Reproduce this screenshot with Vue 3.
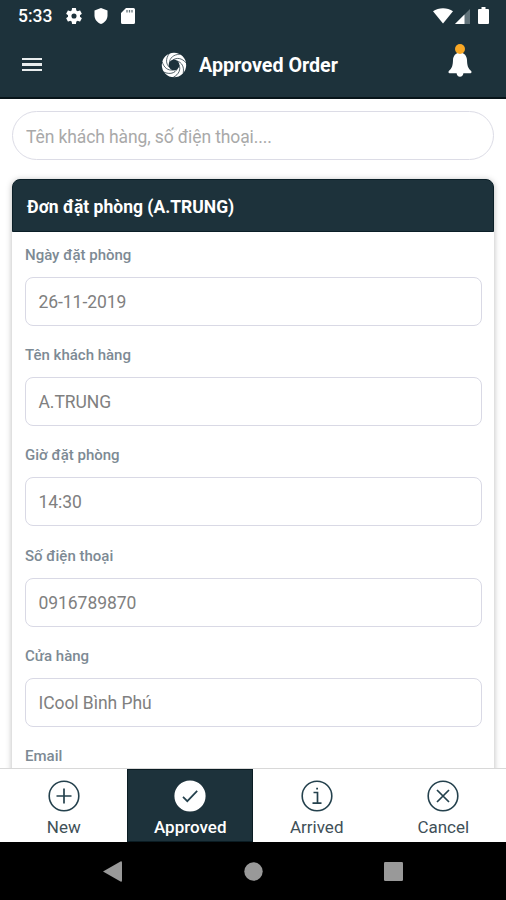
<template>
  <div class="screen">
    <header class="app-header">
      <div class="status-bar">
        <div class="status-left">
          <span class="clock">5:33</span>
          <svg class="icon-gear" viewBox="2 2 20 20" width="16" height="16">
            <path fill="#fff" d="M19.43 12.98c.04-.32.07-.64.07-.98s-.03-.66-.07-.98l2.11-1.65c.19-.15.24-.42.12-.64l-2-3.46c-.12-.22-.39-.3-.61-.22l-2.49 1c-.52-.4-1.08-.73-1.69-.98l-.38-2.65A.49.49 0 0 0 14 2h-4c-.25 0-.46.18-.49.42l-.38 2.65c-.61.25-1.17.59-1.69.98l-2.49-1c-.23-.09-.49 0-.61.22l-2 3.46c-.13.22-.07.49.12.64l2.11 1.65c-.04.32-.07.65-.07.98s.03.66.07.98l-2.11 1.65c-.19.15-.24.42-.12.64l2 3.46c.12.22.39.3.61.22l2.49-1c.52.4 1.08.73 1.69.98l.38 2.65c.03.24.24.42.49.42h4c.25 0 .46-.18.49-.42l.38-2.65c.61-.25 1.17-.59 1.69-.98l2.49 1c.23.09.49 0 .61-.22l2-3.46c.12-.22.07-.49-.12-.64l-2.11-1.65zM12 15.2a3.2 3.2 0 1 1 0-6.4 3.2 3.2 0 0 1 0 6.4z" />
          </svg>
          <svg class="icon-shield" viewBox="0 0 14 16" width="14" height="16">
            <path fill="#fff" d="M7 0 L13.5 2.6 V7.5 C13.5 11.5 10.6 14.8 7 16 C3.4 14.8 .5 11.5 .5 7.5 V2.6 Z" />
          </svg>
          <svg class="icon-sd" viewBox="0 0 14 16" width="14" height="16">
            <path fill="#fff" d="M5 0 H12.5 A1.5 1.5 0 0 1 14 1.5 V14.5 A1.5 1.5 0 0 1 12.5 16 H1.5 A1.5 1.5 0 0 1 0 14.5 V5 Z" />
            <path stroke="#66757b" stroke-width="1.3" d="M6 2 V4.6 M8.5 2 V4.6 M11 2 V4.6" />
          </svg>
        </div>
        <div class="status-right">
          <svg viewBox="0 0 20 16" width="20" height="16">
            <path fill="#fff" d="M0 3.2 C5.5 -.8 14.5 -.8 20 3.2 L10 15.5 Z" />
          </svg>
          <svg class="icon-signal" viewBox="0 0 15 15" width="15" height="15">
            <path fill="#62737a" d="M15 0 V15 H0 Z" />
            <path fill="#fff" d="M9.5 5.5 V15 H0 Z" />
          </svg>
          <svg class="icon-battery" viewBox="0 0 11 17" width="11" height="17">
            <path fill="#fff" d="M3.5 0 H7.5 V2 H10 A1 1 0 0 1 11 3 V16 A1 1 0 0 1 10 17 H1 A1 1 0 0 1 0 16 V3 A1 1 0 0 1 1 2 H3.5 Z" />
          </svg>
        </div>
      </div>

      <div class="title-bar">
        <button class="menu-btn">
          <span></span>
          <span></span>
          <span></span>
        </button>
        <div class="title">
          <svg viewBox="-13 -13 26 26" width="26" height="26">
            <circle r="8.8" fill="none" stroke="#fff" stroke-width="6.8" />
            <g v-for="n in 7" :key="n" :transform="`rotate(${n * 51.43})`">
              <path fill="none" stroke="#1d323b" stroke-width=".7" d="M-4.6 -2 C-4.4 -7 -.5 -10.6 6 -10.8" />
              <path fill="#1d323b" d="M6 -11 L8 -9.9 L9.6 -13 L4.4 -13.5 Z" />
            </g>
          </svg>
          <h1>Approved Order</h1>
        </div>
        <button class="bell-btn">
          <svg viewBox="0 0 24 34" width="24" height="34">
            <path fill="#fff" d="M12 8.5 C7.6 8.8 5.2 12 5 16 C4.8 21.5 4 24.5 .8 27 C.2 28 .5 29.2 1.6 29.2 H8.6 C8.9 31.2 10 32.8 12 32.8 C14 32.8 15.1 31.2 15.4 29.2 H22.4 C23.5 29.2 23.8 28 23.2 27 C20 24.5 19.2 21.5 19 16 C18.8 12 16.4 8.8 12 8.5 Z" />
            <circle cx="12" cy="5" r="5" fill="#f9a825" />
          </svg>
        </button>
      </div>
    </header>

    <main class="content">
      <input v-model="search" class="search" type="text" placeholder="Tên khách hàng, số điện thoại....">
      <section class="order-card">
        <div class="order-title">Đơn đặt phòng (A.TRUNG)</div>
        <div class="order-body">
          <div v-for="field in fields" :key="field.label" class="field">
            <label>{{ field.label }}</label>
            <div class="field-value">{{ field.value }}</div>
          </div>
        </div>
      </section>
    </main>

    <nav class="tabs">
      <button v-for="tab in tabs" :key="tab.name" class="tab" :class="{ active: tab.name === activeTab }"
        @click="activeTab = tab.name">
        <svg viewBox="0 0 32 32" width="32" height="32">
          <circle class="ring" cx="16" cy="16" r="14.8" />
          <path class="glyph" :d="tab.icon" />
        </svg>
        <span>{{ tab.name }}</span>
      </button>
    </nav>

    <footer class="system-nav">
      <svg viewBox="0 0 19 21" width="19" height="21">
        <path d="M0 10.5 L17.5 .4 Q19 0 19 1.5 V19.5 Q19 21 17.5 20.6 Z" />
      </svg>
      <svg viewBox="0 0 19 19" width="19" height="19">
        <circle cx="9.5" cy="9.5" r="9.2" />
      </svg>
      <svg viewBox="0 0 19 19" width="19" height="19">
        <rect width="19" height="19" rx="1.2" />
      </svg>
    </footer>
  </div>
</template>

<script setup>
import { ref } from 'vue';

const search = ref('');
const activeTab = ref('Approved');

const fields = [
  { label: 'Ngày đặt phòng', value: '26-11-2019' },
  { label: 'Tên khách hàng', value: 'A.TRUNG' },
  { label: 'Giờ đặt phòng', value: '14:30' },
  { label: 'Số điện thoại', value: '0916789870' },
  { label: 'Cửa hàng', value: 'ICool Bình Phú' },
  { label: 'Email', value: '' }
];

const tabs = [
  { name: 'New', icon: 'M16 8.5 V23.5 M8.5 16 H23.5' },
  { name: 'Approved', icon: 'M9 16.8 L13.3 21.2 L23.2 10.8' },
  { name: 'Arrived', icon: 'M12.5 12.5 H16.5 V23 M11.5 23.2 H20.5 M15.2 8.6 H17' },
  { name: 'Cancel', icon: 'M10 10 L22 22 M22 10 L10 22' }
];
</script>

<style>
body {
  margin: 0;
  background: #fff;
}
</style>

<style scoped>
.screen {
  width: 506px;
  height: 900px;
  display: flex;
  flex-direction: column;
  overflow: hidden;
  background: #fff;
  font-family: Roboto, "Noto Sans", sans-serif;
}

button {
  padding: 0;
  border: none;
  background: none;
  font-family: inherit;
}

svg {
  display: block;
  flex-shrink: 0;
}

.app-header {
  flex: 0 0 99px;
  box-sizing: border-box;
  background: #1d323b;
  border-bottom: 2px solid #071419;
  color: #fff;
}

.status-bar {
  height: 32px;
  display: flex;
  justify-content: space-between;
  align-items: center;
  padding: 0 17px 0 18px;
}

.status-left,
.status-right {
  display: flex;
  align-items: center;
}

.status-right {
  margin-top: -1px;
}

.clock {
  width: 48px;
  font-size: 17.5px;
  font-weight: 500;
  line-height: 32px;
}

.icon-shield {
  margin-left: 12px;
}

.icon-sd {
  margin-left: 13px;
}

.icon-signal {
  margin: 1px 0 0 2px;
}

.icon-battery {
  margin-left: 8px;
}

.title-bar {
  height: 65px;
  display: grid;
  grid-template-columns: 64px 1fr 64px;
  align-items: center;
}

.menu-btn {
  width: 20px;
  display: grid;
  gap: 3px;
  margin-left: 22px;
}

.menu-btn span {
  height: 2.5px;
  background: #e9edee;
}

.title {
  display: flex;
  align-items: center;
  gap: 12px;
  padding-left: 97px;
}

.title h1 {
  margin: 2px 0 0;
  font-size: 19.7px;
  font-weight: 700;
  line-height: 26px;
  white-space: nowrap;
}

.bell-btn {
  margin: -7px 0 0 6px;
}

.content {
  flex: 1;
  min-height: 0;
  overflow: hidden;
  padding: 12px 12px 0;
}

.search {
  display: block;
  box-sizing: border-box;
  width: 482px;
  height: 49px;
  padding: 2px 13px 0;
  border: 1px solid #dcdce6;
  border-radius: 25px;
  outline: none;
  background: #fff;
  color: #777;
  font-family: inherit;
  font-size: 17.5px;
  letter-spacing: -0.11px;
}

.search::placeholder {
  color: #a9a9a9;
  opacity: 1;
}

.order-card {
  height: 700px;
  margin-top: 19px;
  border-radius: 8px;
  background: #fff;
  box-shadow: 0 1px 6px rgba(0, 0, 0, 0.28);
}

.order-title {
  height: 53px;
  box-sizing: border-box;
  padding-left: 14px;
  border: 1px solid #0b1f27;
  border-radius: 8px 8px 0 0;
  background: #1d323b;
  color: #fff;
  font-size: 17.5px;
  font-weight: 700;
  line-height: 54px;
}

.order-body {
  padding: 12px 12px 0 13px;
}

.field {
  height: 100.2px;
}

.field label {
  display: block;
  height: 33px;
  color: #7d8a94;
  font-size: 15px;
  font-weight: 500;
  line-height: 23px;
}

.field-value {
  box-sizing: border-box;
  height: 49px;
  padding-left: 12.5px;
  border: 1px solid #d9d9e5;
  border-radius: 8px;
  color: #808080;
  font-size: 17.5px;
  letter-spacing: -0.06px;
  line-height: 49px;
}

.tabs {
  flex: 0 0 74px;
  display: grid;
  grid-template-columns: repeat(4, 1fr);
  box-sizing: border-box;
  border-top: 1px solid #d8d8d8;
  background: #fff;
}

.tab {
  display: flex;
  flex-direction: column;
  align-items: center;
  padding: 11px 0 0 1px;
  color: #3f5058;
  font-size: 17px;
  line-height: 20px;
}

.tab span {
  margin-top: 5px;
}

.ring {
  fill: none;
  stroke: #24414d;
  stroke-width: 1.6;
}

.glyph {
  fill: none;
  stroke: #24414d;
  stroke-width: 1.7;
}

.tab.active {
  background: #1d323b;
  box-shadow: inset 0 0 0 1px #0a1c23;
  color: #fff;
  font-weight: 500;
}

.tab.active .ring {
  fill: #fff;
  stroke: #fff;
}

.system-nav {
  flex: 0 0 58px;
  display: flex;
  justify-content: space-between;
  align-items: center;
  box-sizing: border-box;
  padding: 0 103px;
  background: #000;
  fill: #999;
}
</style>
